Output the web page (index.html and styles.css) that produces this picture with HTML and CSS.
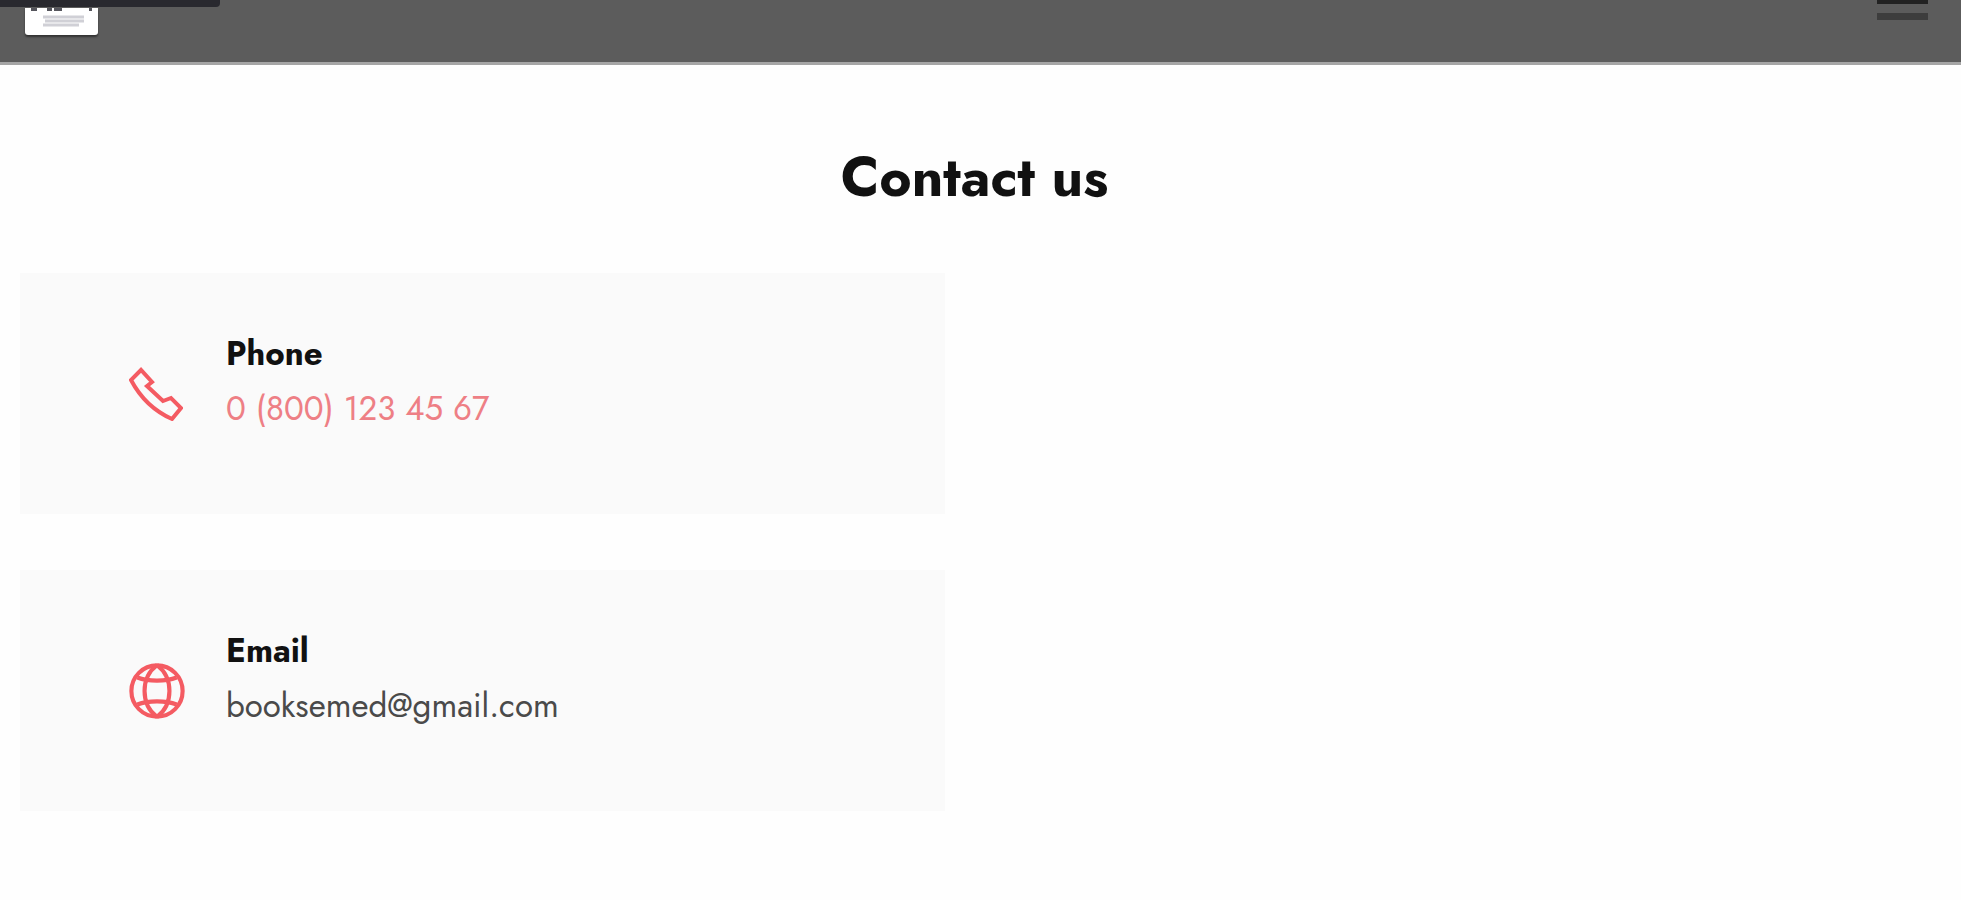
FILE: index.html
```
<!DOCTYPE html>
<html lang="en">
<head>
	<meta charset="UTF-8">
	<meta name="viewport" content="width=device-width, initial-scale=1.0">
	<title>Contact us</title>
	<link rel="stylesheet" href="styles.css">
</head>
<body>
	<header class="header">
		<div class="strip"></div>
		<a class="logo" href="#">
			<svg width="73" height="28" viewBox="0 0 73 28">
				<path d="M6 0h6v3H6zM22 0h5v3h-5zM29 0h8v3h-8zM64 0h3v3h-3z" fill="#55555c"/>
				<path d="M18 9h41M20 13h39M18 17h36" stroke="#d0d0d6" stroke-width="3"/>
			</svg>
		</a>
		<button class="menu"><span></span><span></span></button>
	</header>

	<main class="contact">
		<h1>Contact us</h1>
		<div class="card">
			<svg class="icon" viewBox="0 0 54 54">
				<path d="M12 3 L2 13 C11 30 25 44 43 52 L52 41 L42 31 L34 34 L18 19 L23 15 Z"/>
			</svg>
			<div>
				<h2>Phone</h2>
				<a class="phone" href="tel:08001234567">0 (800) 123 45 67</a>
			</div>
		</div>
		<div class="card">
			<svg class="icon globe" viewBox="0 0 54 54">
				<circle cx="27" cy="27" r="24.7"/>
				<path d="M27 2C11 14 11 40 27 52M27 2C43 14 43 40 27 52"/>
				<path d="M8 14Q16 17 27 17T46 14M8 40Q16 37 27 37T46 40"/>
			</svg>
			<div>
				<h2>Email</h2>
				<span class="email">booksemed@gmail.com</span>
			</div>
		</div>
	</main>
</body>
</html>
```
FILE: styles.css
```
*{
	box-sizing: border-box;
}
body{
	margin: 0;
	background: #fefefe;
	color: #111;
	font-family: "Jost", "Lato", sans-serif;
}
.header{
	position: relative;
	display: flex;
	justify-content: space-between;
	align-items: flex-start;
	height: 65px;
	padding: 0 33px 0 25px;
	background: #5c5c5c;
	border-bottom: 3px solid #a5a5a5;
}
/* dark bar over the top left corner */
.strip{
	position: absolute;
	top: 0;
	left: 0;
	width: 220px;
	height: 7px;
	background: #29292f;
	border-radius: 0 0 4px 0;
}
.logo{
	width: 73px;
	height: 27px;
	margin-top: 8px;
	background: #fff;
	border-radius: 0 0 3px 3px;
	box-shadow: 0 2px 2px #333;
}
.logo svg{
	display: block;
}
.menu{
	width: 51px;
	padding: 0;
	border: 0;
	background: none;
}
.menu span{
	display: block;
	height: 4px;
	background: #222;
}
.menu span + span{
	height: 7px;
	margin-top: 9px;
	background: #3d3d3d;
}
.contact{
	padding: 79px 20px 0;
}
h1{
	margin: 0 0 63px;
	padding-right: 12px;
	font-size: 55px;
	line-height: 66px;
	font-weight: bold;
	text-align: center;
}
.card{
	display: flex;
	width: 925px;
	height: 241px;
	margin-bottom: 56px;
	padding: 54px 109px;
	background: #fafafa;
}
.icon{
	width: 54px;
	height: 54px;
	margin: 40px 43px 0 0;
	fill: none;
	stroke: #f45b62;
	stroke-width: 4;
}
.globe{
	width: 56px;
	height: 56px;
	margin: 39px 41px 0 0;
}
h2{
	margin: 0;
	font-size: 33px;
	line-height: 54px;
	font-weight: bold;
}
.phone,
.email{
	display: block;
	font-size: 33px;
	line-height: 56px;
	text-decoration: none;
	white-space: nowrap;
}
.phone{
	color: #ee7f85;
}
.email{
	color: #4a4a4a;
}
```
